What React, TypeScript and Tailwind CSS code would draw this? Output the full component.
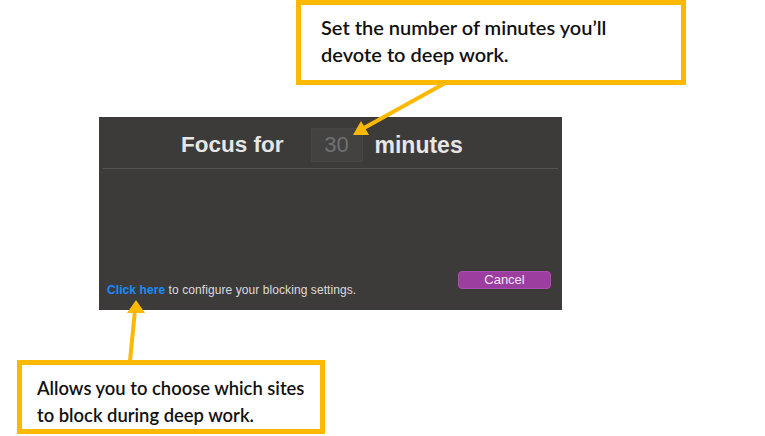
export default function App() {
  const callout = { fontFamily: "Lato, 'Noto Sans', sans-serif" };
  const mac = { fontFamily: "'Liberation Sans', Arial, sans-serif" };
  return (
    <div className="relative w-[765px] h-[436px] bg-white overflow-hidden">
      <div className="flex flex-col items-start">
        <div
          className="ml-[296px] w-[390px] h-[85px] border-[5px] border-[#fcb900] pl-[20px] pt-[9px] text-[20px] leading-[27px] font-semibold text-[#111]"
          style={callout}
        >
          <div>Set the number of minutes you’ll</div>
          <div>devote to deep work.</div>
        </div>

        <div className="mt-[32px] ml-[99px] w-[463px] h-[193px] bg-[#3c3b3a] flex flex-col" style={mac}>
          <div className="flex items-center pl-[82px] pt-[11px] h-[45px]">
            <span className="text-[22.5px] font-bold text-[#e6e6e6] leading-none">Focus for</span>
            <div className="ml-[27px] w-[52px] h-[34px] bg-[#434241] border border-[#474645] flex items-center justify-center text-[22px] font-light text-[#707070] leading-none">
              30
            </div>
            <span className="ml-[12px] text-[23px] font-bold text-[#e6e6e6] leading-none">minutes</span>
          </div>
          <div className="mx-[4px] mt-[6px] h-px bg-[#555453]" />
          <div className="flex-1 flex items-end justify-between pl-[8px] pr-[11px] pb-[15px]">
            <div className="text-[12px] leading-[14px] text-[#dcdcdc] mb-[-2px] tracking-[0.08px]">
              <span className="font-bold text-[#1a8cff]">Click here</span> to configure your blocking settings.
            </div>
            <button className="mb-[6px] w-[93px] h-[18px] rounded-[4px] bg-[#9c3e9f] text-[13px] leading-[16px] text-[#f2e6f2] border border-[#a850aa]">
              Cancel
            </button>
          </div>
        </div>

        <div
          className="mt-[50px] ml-[17px] w-[308px] h-[74px] border-[5px] border-[#fcb900] pl-[15px] pt-[10px] text-[18.4px] leading-[27px] font-semibold text-[#111]"
          style={callout}
        >
          <div>Allows you to choose which sites</div>
          <div>to block during deep work.</div>
        </div>
      </div>

      <svg className="absolute inset-0 pointer-events-none" width="765" height="436" viewBox="0 0 765 436">
        <line x1="447" y1="82" x2="364" y2="128" stroke="#fcb900" strokeWidth="4" />
        <polygon points="353,135 369,135 361,121" fill="#fcb900" />
        <line x1="130" y1="361" x2="135" y2="310" stroke="#fcb900" strokeWidth="4" />
        <polygon points="136,300 127,313 145,313" fill="#fcb900" />
      </svg>
    </div>
  );
}
